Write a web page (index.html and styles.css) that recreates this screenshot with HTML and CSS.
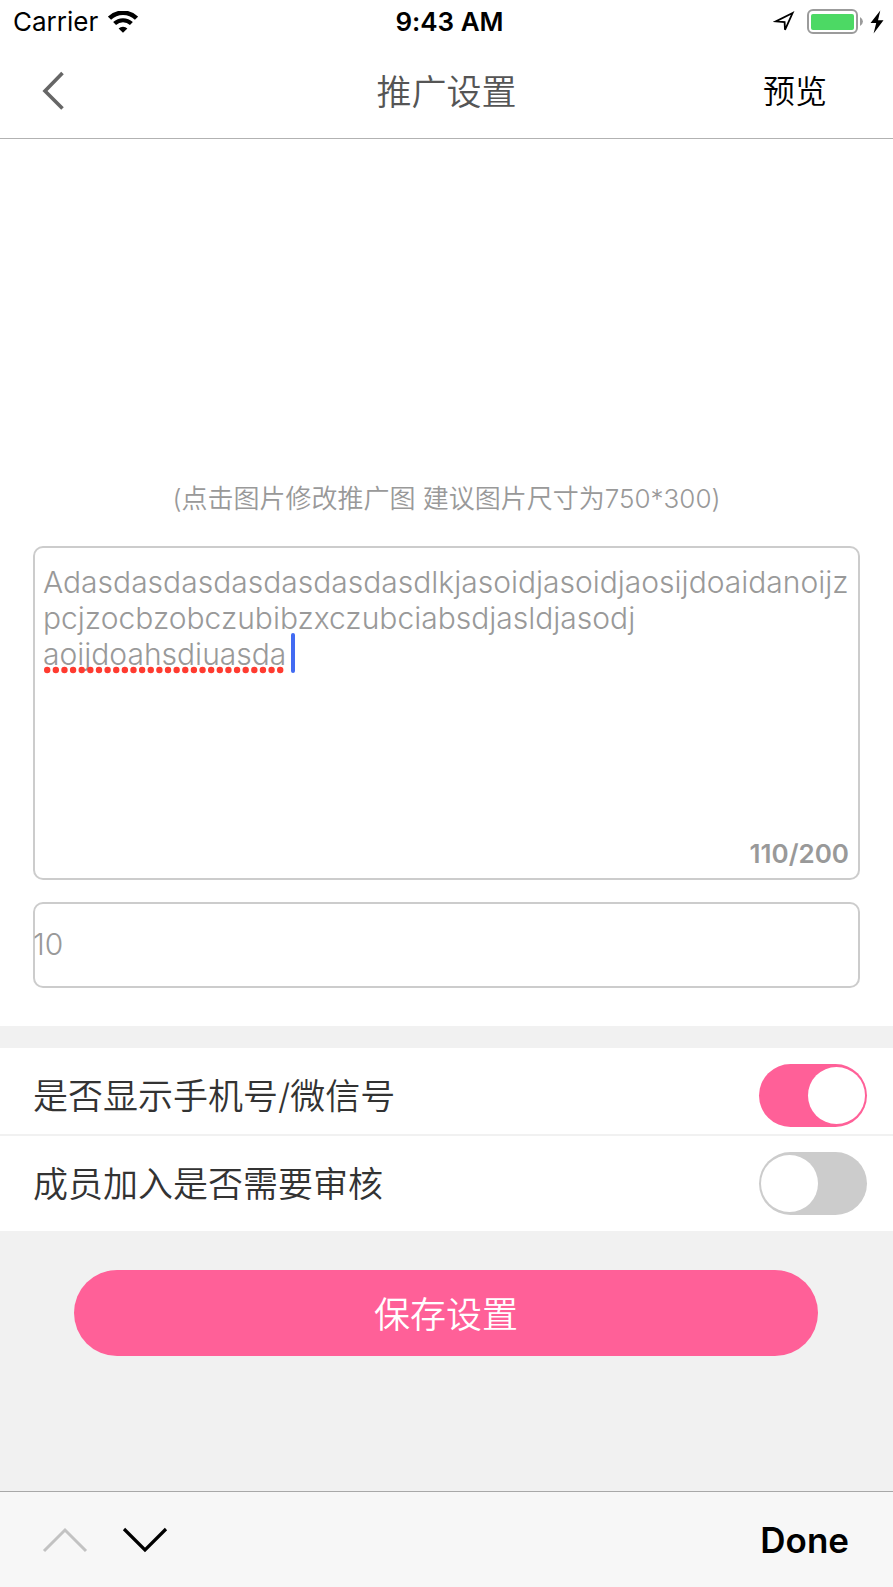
FILE: index.html
```html
<!DOCTYPE html>
<html lang="zh-CN">
<head>
<meta charset="utf-8">
<meta name="viewport" content="width=device-width, initial-scale=1">
<title>推广设置</title>
<link rel="stylesheet" href="styles.css">
</head>
<body>
<div class="screen">
  <div class="status">
    <div class="status-left">
      <span>Carrier</span>
      <svg class="wifi" width="30" height="22" viewBox="0 0 30 22" aria-hidden="true">
        <path d="M1.5 7.2A19.5 19.5 0 0 1 28.5 7.2" fill="none" stroke="#000" stroke-width="4.6"/>
        <path d="M6.6 12.6A12.2 12.2 0 0 1 23.4 12.6" fill="none" stroke="#000" stroke-width="4.2"/>
        <path d="M15 21.8L10.6 17.4A6.4 6.4 0 0 1 19.4 17.4Z"/>
      </svg>
    </div>
    <span class="clock">9:43 AM</span>
    <div class="status-right">
      <svg width="22" height="22" viewBox="0 0 22 22" aria-hidden="true">
        <path d="M19.6 2L2.8 10.4L11.6 11.2L12 18.8Z" fill="none" stroke="#000" stroke-width="1.8"/>
      </svg>
      <svg width="57" height="26" viewBox="0 0 57 26" aria-hidden="true">
        <rect x="1" y="1" width="49" height="23" rx="5" fill="none" stroke="#9b9b9b" stroke-width="2"/>
        <rect x="4" y="5" width="43" height="16" rx="2" fill="#4cd964"/>
        <path d="M53 8Q56 10 56 12.500T53 17Z" fill="#9b9b9b"/>
      </svg>
      <svg width="14" height="24" viewBox="0 0 14 24" aria-hidden="true">
        <path d="M10.300 0.500L0.500 13H6.200L3.600 23.500L13.500 10.200H8Z"/>
      </svg>
    </div>
  </div>

  <header class="nav">
    <button class="nav-back" type="button" aria-label="返回">
      <svg width="24" height="40" viewBox="0 0 24 40" aria-hidden="true">
        <path d="M20.500 2L3 20L20.500 37.500" fill="none" stroke="#666" stroke-width="3.600"/>
      </svg>
    </button>
    <h1 class="nav-title">推广设置</h1>
    <button class="nav-preview" type="button">预览</button>
  </header>

  <main class="content">
    <section class="promo">
      <div class="picture"></div>
      <p class="hint">(点击图片修改推广图 建议图片尺寸为750*300)</p>
      <div class="editor">
        <textarea class="intro" aria-label="推广介绍" maxlength="200" spellcheck="false">Adasdasdasdasdasdasdasdlkjasoidjasoidjaosijdoaidanoijz
pcjzocbzobczubibzxczubciabsdjasldjasodj
aoijdoahsdiuasda </textarea>
        <svg class="misspelled" width="240" height="8" viewBox="0 0 240 8" aria-hidden="true">
          <path d="M3.200 4H238" fill="none" stroke="#ff3b30" stroke-width="6.400" stroke-linecap="round" stroke-dasharray="0 8.630"/>
        </svg>
        <span class="caret"></span>
        <span class="count">110/200</span>
      </div>
      <input class="amount" type="text" aria-label="数量" value="10">
    </section>

    <section class="options">
      <label class="option">
        <span>是否显示手机号/微信号</span>
        <input class="switch" type="checkbox" role="switch" checked>
      </label>
      <label class="option">
        <span>成员加入是否需要审核</span>
        <input class="switch" type="checkbox" role="switch">
      </label>
    </section>

    <button class="save" type="button">保存设置</button>
  </main>

  <footer class="toolbar">
    <button type="button" class="step" aria-label="上一项" disabled>
      <svg width="46" height="26" viewBox="0 0 46 26" aria-hidden="true">
        <path d="M2 24L23 3L44 24" fill="none" stroke="#c2c2c2" stroke-width="3"/>
      </svg>
    </button>
    <button type="button" class="step" aria-label="下一项">
      <svg width="46" height="26" viewBox="0 0 46 26" aria-hidden="true">
        <path d="M2 2L23 23L44 2" fill="none" stroke="#000" stroke-width="3.200"/>
      </svg>
    </button>
    <button type="button" class="done">Done</button>
  </footer>
</div>
</body>
</html>
```
FILE: styles.css
```css
* {
  box-sizing: border-box;
}

body {
  margin: 0;
  background: #f1f1f1;
  color: #000;
  font-family: Inter, "Noto Sans CJK SC", sans-serif;
  font-feature-settings: "calt" 0;
}

button {
  padding: 0;
  border: 0;
  background: none;
  color: inherit;
  font: inherit;
}

svg {
  display: block;
}

.screen {
  display: flex;
  flex-direction: column;
  min-height: 100vh;
}

.status {
  display: grid;
  grid-template-columns: 1fr auto 1fr;
  align-items: center;
  height: 44px;
  padding: 0 9px 0 13px;
  background: #fff;
  font-size: 26px;
  line-height: 44px;
}

.status-left,
.status-right {
  display: flex;
  align-items: center;
  gap: 10px;
}

.status-right {
  justify-content: flex-end;
  gap: 6px;
}

.status-right svg:first-child {
  margin-right: 6px;
}

.clock {
  padding-left: 2px;
  font-weight: 600;
}

.nav {
  display: grid;
  grid-template-columns: 1fr auto 1fr;
  align-items: center;
  height: 95px;
  padding: 0 66px 4px 42px;
  border-bottom: 1px solid #b2b2b2;
  background: #fff;
}

.nav-back {
  justify-self: start;
  padding-top: 4px;
}

.nav-title {
  margin: 0 0 0 24px;
  color: #555;
  font-size: 35px;
  font-weight: 350;
}

.nav-preview {
  justify-self: end;
  font-size: 32px;
  font-weight: 350;
}

.content {
  display: flex;
  flex: 1;
  flex-direction: column;
}

.promo {
  display: flex;
  flex-direction: column;
  padding: 0 33px 38px;
  background: #fff;
}

.picture {
  height: 340px;
}

.hint {
  margin: 0 0 27px;
  color: #999;
  font-size: 26px;
  font-weight: 350;
  line-height: 40px;
  text-align: center;
}

.editor {
  position: relative;
  margin-bottom: 22px;
}

.intro,
.amount {
  display: block;
  width: 100%;
  margin: 0;
  border: 0;
  border-radius: 10px;
  outline: 0;
  background: #fff;
  box-shadow: inset 0 0 0 2px #ccc;
  color: #999;
  font-family: inherit;
  font-size: 30px;
  font-weight: 350;
}

.intro {
  height: 334px;
  padding: 18px 10px;
  line-height: 36px;
  white-space: pre;
  overflow: hidden;
  resize: none;
}

.misspelled {
  position: absolute;
  top: 120px;
  left: 11px;
}

.caret {
  position: absolute;
  top: 87px;
  left: 258px;
  width: 4px;
  height: 40px;
  border-radius: 2px;
  background: #426bf2;
}

.count {
  position: absolute;
  right: 11px;
  bottom: 10px;
  color: #999;
  font-size: 26px;
  font-weight: 600;
  line-height: 32px;
}

.amount {
  height: 86px;
  padding: 0 0 2px;
}

.options {
  margin-top: 22px;
  background: #fff;
}

.option {
  display: flex;
  align-items: center;
  justify-content: space-between;
  padding: 16px 26px 16px 33px;
  color: #333;
  font-size: 35px;
  font-weight: 350;
  line-height: 48px;
}

.option:first-child {
  padding-bottom: 7px;
  border-bottom: 2px solid #f1f1f1;
}

.switch {
  display: flex;
  align-items: center;
  width: 108px;
  height: 63px;
  margin: 0;
  padding: 0 2px;
  border-radius: 32px;
  appearance: none;
  background: #ccc;
}

.switch::before {
  content: "";
  width: 57px;
  height: 57px;
  border-radius: 50%;
  background: #fff;
}

.switch:checked {
  justify-content: flex-end;
  background: #ff6098;
}

.save {
  height: 86px;
  margin: 39px 75px 0 74px;
  padding-bottom: 2px;
  border-radius: 43px;
  background: #ff6098;
  color: #fff;
  font-size: 36px;
  font-weight: 350;
}

.toolbar {
  display: flex;
  align-items: center;
  gap: 34px;
  height: 96px;
  padding: 0 44px 0 42px;
  border-top: 1px solid #a8a8a8;
  background: #f7f7f7;
}

.done {
  margin-left: auto;
  font-size: 35px;
  font-weight: 600;
}
```
